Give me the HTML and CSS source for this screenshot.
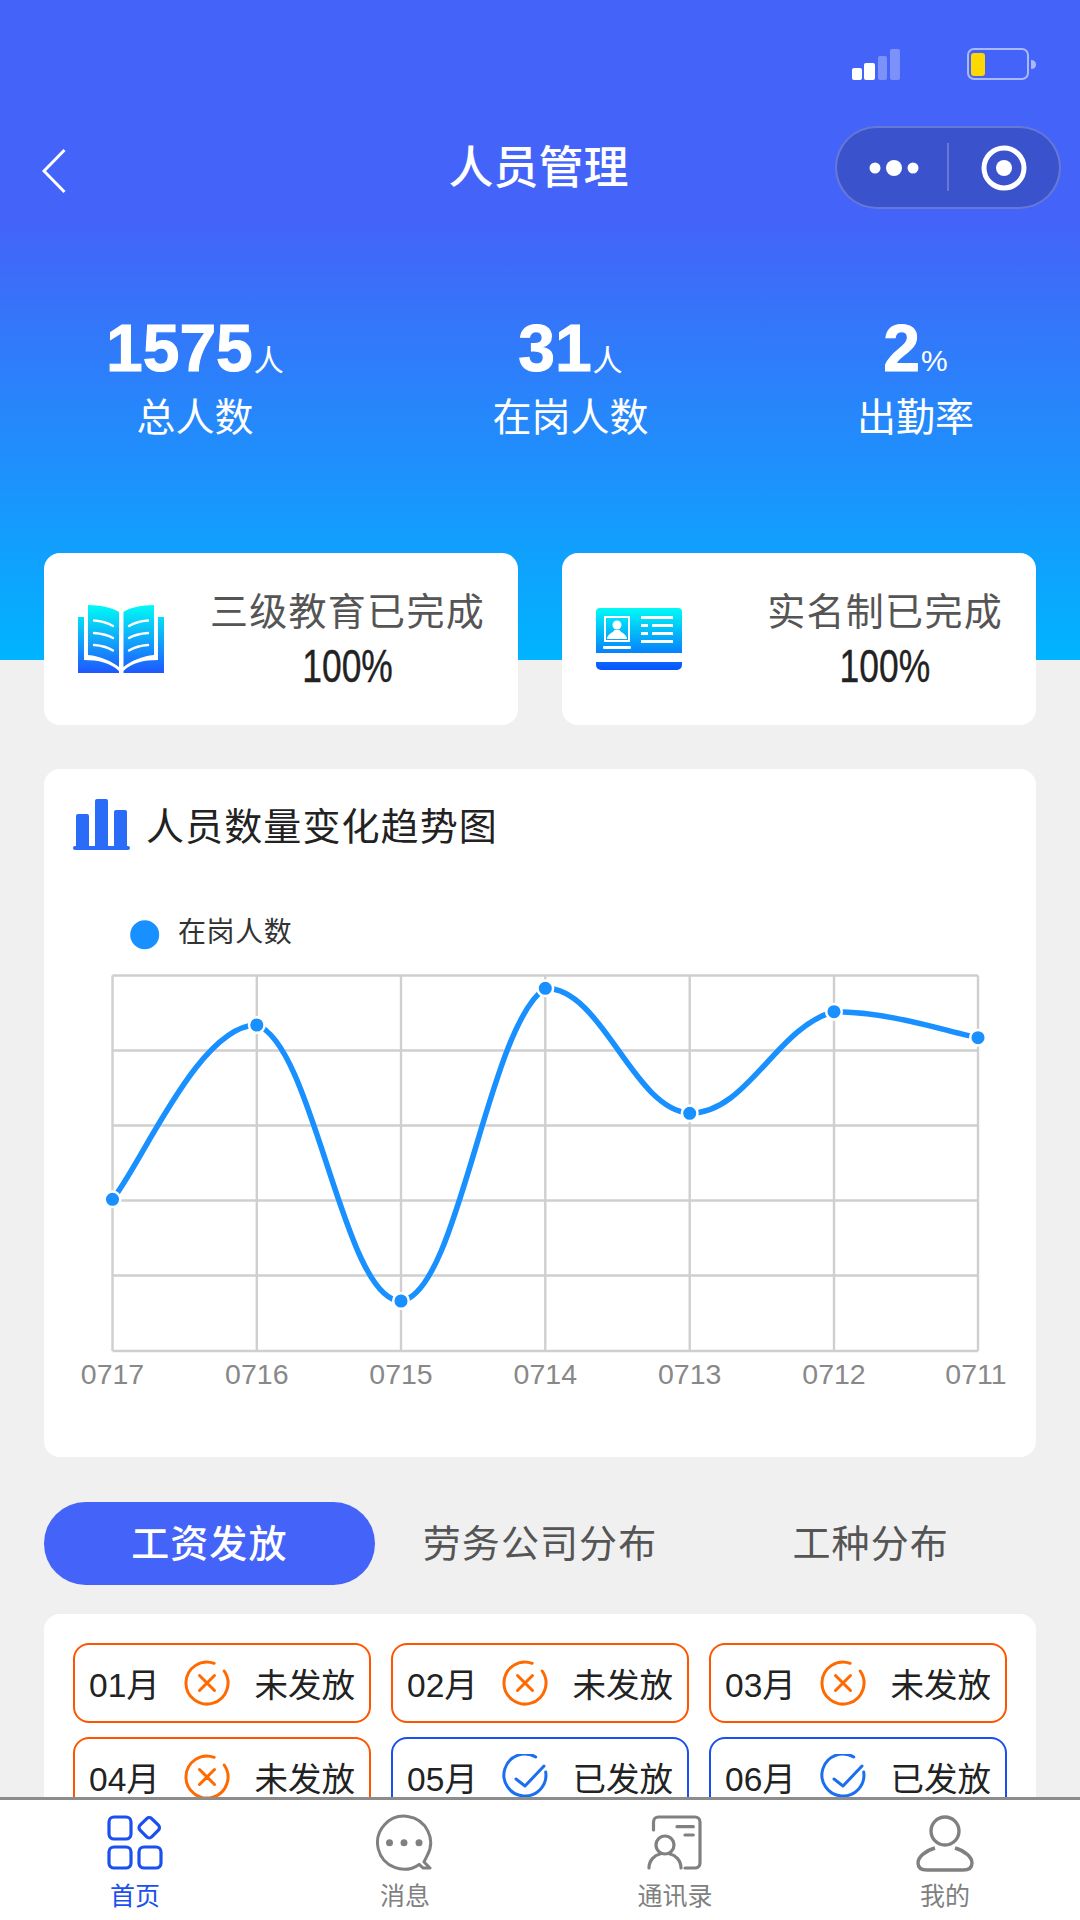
FILE: index.html
```html
<!DOCTYPE html>
<html lang="zh-CN">
<head>
<meta charset="utf-8">
<title>人员管理</title>
<link rel="stylesheet" href="styles.css">
</head>
<body>
<svg class="sprite" xmlns="http://www.w3.org/2000/svg">
  <symbol id="i-no" viewBox="0 0 46 46">
    <path d="M40.2 11A21 21 0 1 1 30.2 3.3" fill="none" stroke="currentColor" stroke-width="3" stroke-linecap="round"/>
    <path d="M15.5 15.5L30.5 30.5M30.5 15.5L15.5 30.5" fill="none" stroke="currentColor" stroke-width="3" stroke-linecap="round"/>
  </symbol>
  <symbol id="i-ok" viewBox="0 0 46 46">
    <path d="M43.7 18A21 21 0 1 1 33.7 3" fill="none" stroke="currentColor" stroke-width="3" stroke-linecap="round"/>
    <path d="M14 25L23 32L42 12" fill="none" stroke="currentColor" stroke-width="3" stroke-linecap="round" stroke-linejoin="round"/>
  </symbol>
</svg>
<div class="page">
  <main class="main">
    <header class="header">
      <div class="status">
        <svg class="signal" viewBox="0 0 48 31" width="48" height="31">
          <rect x="0" y="19" width="10" height="12" rx="2" fill="#fff"/>
          <rect x="12" y="14" width="11" height="17" rx="2" fill="#fff"/>
          <rect x="26" y="7" width="9" height="24" rx="2" fill="#fff" fill-opacity=".3"/>
          <rect x="38" y="0" width="10" height="31" rx="2" fill="#fff" fill-opacity=".3"/>
        </svg>
        <svg class="battery" viewBox="0 0 70 32" width="70" height="32">
          <rect x="2" y="1" width="60" height="30" rx="6" fill="none" stroke="#fff" stroke-opacity=".55" stroke-width="2"/>
          <rect x="5" y="5" width="14" height="23" rx="3" fill="#ffd800"/>
          <path d="M65 12c3 0 5 1.500 5 4.500s-2 4.500-5 4.500z" fill="#fff" fill-opacity=".55"/>
        </svg>
      </div>
      <div class="titlebar">
        <svg class="back" viewBox="0 0 24 46" width="24" height="46">
          <path d="M22.500 2L2 23L22.500 44" fill="none" stroke="#fff" stroke-width="3"/>
        </svg>
        <h1 class="title">人员管理</h1>
        <div class="capsule">
          <svg class="capsule-svg" viewBox="0 0 222 79" width="222" height="79">
            <circle cx="38" cy="40" r="5.500" fill="#fff"/>
            <circle cx="57" cy="40" r="8" fill="#fff"/>
            <circle cx="76" cy="40" r="5.500" fill="#fff"/>
            <path d="M111 15V63" stroke="#fff" stroke-opacity=".3" stroke-width="1.500"/>
            <circle cx="167" cy="40" r="20" fill="none" stroke="#fff" stroke-width="5"/>
            <circle cx="167" cy="40" r="8" fill="#fff"/>
          </svg>
        </div>
      </div>
      <div class="stats">
        <div class="stat">
          <div class="stat-value"><span class="num">1575</span><span class="unit">人</span></div>
          <div class="stat-label">总人数</div>
        </div>
        <div class="stat">
          <div class="stat-value"><span class="num">31</span><span class="unit">人</span></div>
          <div class="stat-label">在岗人数</div>
        </div>
        <div class="stat">
          <div class="stat-value"><span class="num">2</span><span class="unit">%</span></div>
          <div class="stat-label">出勤率</div>
        </div>
      </div>
    </header>

    <section class="summary">
      <div class="summary-card">
        <svg viewBox="0 0 86 68" width="86" height="68">
          <defs>
            <linearGradient id="g-book" gradientUnits="userSpaceOnUse" x1="0" y1="0" x2="0" y2="68">
              <stop offset="0" stop-color="#00fbf5"/><stop offset="1" stop-color="#1f57ff"/>
            </linearGradient>
          </defs>
          <path fill="url(#g-book)" d="M10 0C22 .5 33 2 41 7V62C33 56 22 51 10 50Z"/>
          <path fill="url(#g-book)" d="M76 0C64 .5 53 2 45.500 7V62C53 56 64 51 76 50Z"/>
          <path fill="url(#g-book)" d="M0 12H6V55C20 55 33 58 41 66V68H0Z"/>
          <path fill="url(#g-book)" d="M86 12H80V55C66 55 53 58 45.500 66V68H86Z"/>
          <g fill="none" stroke="#fff" stroke-width="2.400" stroke-linecap="round">
            <path d="M16 15.500C23 16 30 18 35 21"/><path d="M16 28C23 28.500 30 30 35 33"/><path d="M16 40C23 40.500 30 42.500 35 45.500"/>
            <path d="M70 15.500C63 16 56 18 51 21"/><path d="M70 28C63 28.500 56 30 51 33"/><path d="M70 40C63 40.500 56 42.500 51 45.500"/>
          </g>
        </svg>
        <div class="summary-text">
          <div class="summary-label">三级教育已完成</div>
          <div class="summary-value">100%</div>
        </div>
      </div>
      <div class="summary-card">
        <svg viewBox="0 0 86 62" width="86" height="62">
          <defs>
            <linearGradient id="g-id" gradientUnits="userSpaceOnUse" x1="0" y1="0" x2="0" y2="62">
              <stop offset="0" stop-color="#00fbf5"/><stop offset="1" stop-color="#0a52ff"/>
            </linearGradient>
          </defs>
          <path fill="url(#g-id)" d="M4 0H82A4 4 0 0 1 86 4V45H0V4A4 4 0 0 1 4 0Z"/>
          <path fill="url(#g-id)" d="M0 54H86V57A5 5 0 0 1 81 62H5A5 5 0 0 1 0 57Z"/>
          <rect x="9" y="9" width="24" height="24" fill="none" stroke="#fff" stroke-width="2"/>
          <circle cx="21" cy="17" r="4.500" fill="#fff"/>
          <path d="M11 31C11 26 17 25 18.500 22H23.500C25 25 31 26 31 31Z" fill="#fff"/>
          <g fill="#fff">
            <rect x="7" y="38" width="28" height="3" rx="1"/>
            <rect x="45" y="8" width="32" height="3"/>
            <rect x="45" y="16" width="7" height="3"/><rect x="56" y="16" width="21" height="3"/>
            <rect x="45" y="24" width="7" height="3"/><rect x="56" y="24" width="21" height="3"/>
            <rect x="45" y="32" width="32" height="3"/>
          </g>
        </svg>
        <div class="summary-text">
          <div class="summary-label">实名制已完成</div>
          <div class="summary-value">100%</div>
        </div>
      </div>
    </section>

    <section class="chart-card">
      <div class="chart-head">
        <svg viewBox="0 0 57 51" width="57" height="51">
          <g fill="#2a6cf8">
            <path d="M3 17a2 2 0 0 1 2-2h9a2 2 0 0 1 2 2v30H3z"/>
            <path d="M22 2a2 2 0 0 1 2-2h9a2 2 0 0 1 2 2v45H22z"/>
            <path d="M41 13a2 2 0 0 1 2-2h9a2 2 0 0 1 2 2v34H41z"/>
            <rect x="0" y="47" width="57" height="4" rx="2"/>
          </g>
        </svg>
        <h2 class="chart-title">人员数量变化趋势图</h2>
      </div>
      <svg class="chart" viewBox="44 900 992 557" width="992" height="557">
        <circle cx="144.700" cy="934.700" r="14.500" fill="#1890ff"/>
        <text class="legend-text" x="178" y="942">在岗人数</text>
        <g stroke="#cfcfcf" stroke-width="2.400" fill="none">
          <path d="M112.500 975.500H978M112.500 1050.500H978M112.500 1125.500H978M112.500 1200.500H978M112.500 1275.500H978M112.500 1351H978"/>
          <path d="M112.500 975.500V1351M256.800 975.500V1351M401 975.500V1351M545.300 975.500V1351M689.700 975.500V1351M834 975.500V1351M978 975.500V1351"/>
        </g>
        <path fill="none" stroke="#1890ff" stroke-width="5.500" d="M112.500 1199.300C141.400 1164.400 199 1025 256.800 1025C314.500 1045.300 343.300 1301 401 1301C458.700 1293.700 487.600 1025.800 545.300 988.300C603 988.300 632 1108.600 689.700 1113.300C747.400 1113.300 776.300 1026.800 834 1011.700C891.700 1011.700 949.200 1032.500 978 1037.700"/>
        <g fill="#1890ff" stroke="#fff" stroke-width="2.500">
          <circle cx="112.500" cy="1199.300" r="7.800"/>
          <circle cx="256.800" cy="1025" r="7.800"/>
          <circle cx="401" cy="1301" r="7.800"/>
          <circle cx="545.300" cy="988.300" r="7.800"/>
          <circle cx="689.700" cy="1113.300" r="7.800"/>
          <circle cx="834" cy="1011.700" r="7.800"/>
          <circle cx="978" cy="1037.700" r="7.800"/>
        </g>
        <g class="axis-text" text-anchor="middle">
          <text x="112.500" y="1384">0717</text>
          <text x="256.800" y="1384">0716</text>
          <text x="401" y="1384">0715</text>
          <text x="545.300" y="1384">0714</text>
          <text x="689.700" y="1384">0713</text>
          <text x="834" y="1384">0712</text>
          <text x="976" y="1384">0711</text>
        </g>
      </svg>
    </section>

    <nav class="tabs">
      <div class="tab tab-active">工资发放</div>
      <div class="tab">劳务公司分布</div>
      <div class="tab">工种分布</div>
    </nav>

    <section class="pay-card">
      <div class="pay-item pay-no"><span>01月</span><svg class="pay-icon"><use href="#i-no"/></svg><span>未发放</span></div>
      <div class="pay-item pay-no"><span>02月</span><svg class="pay-icon"><use href="#i-no"/></svg><span>未发放</span></div>
      <div class="pay-item pay-no"><span>03月</span><svg class="pay-icon"><use href="#i-no"/></svg><span>未发放</span></div>
      <div class="pay-item pay-no"><span>04月</span><svg class="pay-icon"><use href="#i-no"/></svg><span>未发放</span></div>
      <div class="pay-item pay-ok"><span>05月</span><svg class="pay-icon"><use href="#i-ok"/></svg><span>已发放</span></div>
      <div class="pay-item pay-ok"><span>06月</span><svg class="pay-icon"><use href="#i-ok"/></svg><span>已发放</span></div>
    </section>
  </main>

  <footer class="tabbar">
    <div class="tabbar-item tabbar-active">
      <svg viewBox="0 0 60 60" width="60" height="60">
        <g fill="none" stroke="currentColor" stroke-width="3.200" stroke-linejoin="round">
          <rect x="4" y="5" width="22" height="22" rx="5"/>
          <rect x="36" y="7.500" width="16.500" height="16.500" rx="3.500" transform="rotate(45 44.300 15.700)"/>
          <rect x="4" y="35" width="22" height="21" rx="5"/>
          <rect x="34" y="35" width="22" height="21" rx="5"/>
        </g>
      </svg>
      <span class="tabbar-label">首页</span>
    </div>
    <div class="tabbar-item">
      <svg viewBox="0 0 60 60" width="60" height="60">
        <path d="M44.200 52.400A26.500 26.500 0 1 1 52 43.900L49 50L55 56H48Z" fill="none" stroke="currentColor" stroke-width="3" stroke-linejoin="round"/>
        <circle cx="14.500" cy="30.700" r="3.500" fill="currentColor"/>
        <circle cx="29" cy="30.700" r="3.500" fill="currentColor"/>
        <circle cx="44" cy="30.700" r="3.500" fill="currentColor"/>
      </svg>
      <span class="tabbar-label">消息</span>
    </div>
    <div class="tabbar-item">
      <svg viewBox="0 0 60 60" width="60" height="60">
        <g fill="none" stroke="currentColor" stroke-width="3.200" stroke-linecap="round">
          <path d="M8.500 18V10a5 5 0 0 1 5-5H50a5 5 0 0 1 5 5V51a5 5 0 0 1-5 5H40"/>
          <circle cx="20" cy="33" r="9"/>
          <path d="M4 56C4 48 10 43 15 42M36 56C36 48 30 43 25 42"/>
          <path d="M32 14.700H48.300M40 23H48.300"/>
        </g>
      </svg>
      <span class="tabbar-label">通讯录</span>
    </div>
    <div class="tabbar-item">
      <svg viewBox="0 0 60 60" width="60" height="60">
        <g fill="none" stroke="currentColor" stroke-width="3.400">
          <circle cx="30" cy="19" r="14"/>
          <path d="M20 36C10 39 3 45 3 51C3 56 7 58 12 58H48C53 58 57 56 57 51C57 45 50 39 40 36"/>
        </g>
      </svg>
      <span class="tabbar-label">我的</span>
    </div>
  </footer>
</div>
</body>
</html>
```

FILE: styles.css
```css
* { box-sizing: border-box; }
html, body { margin: 0; padding: 0; }
body {
  width: 1080px;
  height: 1920px;
  overflow: hidden;
  background: #f0f0f0;
  font-family: "Liberation Sans", "Noto Sans CJK SC", sans-serif;
}
.sprite { width: 0; height: 0; position: absolute; }
.page { width: 1080px; height: 1920px; display: flex; flex-direction: column; overflow: hidden; }
.main { height: 1797px; flex: none; overflow: hidden; }

.header {
  height: 660px;
  background: linear-gradient(180deg, #4463f8 0, #4463f8 220px, #00b4ff 660px);
  color: #fff;
  padding-top: 48px;
}
.status { height: 32px; display: flex; justify-content: flex-end; align-items: flex-end; padding-right: 44px; gap: 66px; }
.titlebar {
  margin-top: 45px;
  height: 83px;
  display: grid;
  grid-template-columns: minmax(0, 1fr) auto minmax(0, 1fr);
  align-items: center;
  padding: 0 19px 0 42px;
}
.back { display: block; margin-top: 6px; }
.title { margin: 0; padding: 2px 26px 0 0; font-size: 45px; font-weight: 500; line-height: 83px; }
.capsule {
  justify-self: end;
  flex: none;
  width: 226px;
  height: 83px;
  border-radius: 42px;
  background: #3a52cc;
  border: 2px solid rgba(255, 255, 255, .22);
}
.capsule-svg { display: block; }

.stats { margin-top: 110px; padding: 0 106px; display: flex; justify-content: space-between; }
.stat { display: flex; flex-direction: column; align-items: center; }
.stat-value { height: 60px; line-height: 60px; white-space: nowrap; }
.num { font-size: 66px; font-weight: 700; -webkit-text-stroke: 1px #fff; }
.unit { font-size: 30px; margin-left: 1px; }
.stat-label { margin-top: 12px; font-size: 39px; line-height: 56px; }

.summary { margin: -107px 44px 0; display: grid; grid-template-columns: 474px 474px; gap: 44px; }
.summary-card {
  height: 172px;
  background: #fff;
  border-radius: 16px;
  display: flex;
  align-items: center;
  justify-content: space-between;
  padding: 0 33px 0 34px;
}
.summary-text { text-align: center; }
.summary-label { font-size: 38px; line-height: 54px; color: #555; letter-spacing: 1.300px; }
.summary-value { font-size: 46px; line-height: 54px; color: #222; transform: scaleX(.77); -webkit-text-stroke: .4px #222; }

.chart-card { margin: 44px 44px 0; height: 688px; background: #fff; border-radius: 16px; overflow: hidden; }
.chart-head { height: 131px; padding: 30px 0 0 29px; display: flex; align-items: flex-start; gap: 16px; }
.chart-title { margin: 0; padding-top: 1px; font-size: 38px; font-weight: 400; line-height: 54px; color: #222; letter-spacing: 1.100px; }
.chart { display: block; }
.legend-text { font-size: 28px; fill: #333; letter-spacing: .6px; }
.axis-text { font-size: 28.500px; fill: #888; }

.tabs { margin: 45px 44px 0; height: 83px; display: grid; grid-template-columns: repeat(3, 1fr); }
.tab { display: flex; align-items: center; justify-content: center; padding-bottom: 6px; font-size: 38px; color: #555; letter-spacing: 1.100px; border-radius: 42px; }
.tab-active { background: #4463f8; color: #fff; font-weight: 500; }

.pay-card {
  margin: 29px 44px 0;
  background: #fff;
  border-radius: 16px;
  padding: 29px 30px 29px 29px;
  display: grid;
  grid-template-columns: repeat(3, 298px);
  column-gap: 20px;
  row-gap: 14px;
}
.pay-item {
  height: 80px;
  border: 2px solid;
  border-radius: 16px;
  display: flex;
  align-items: center;
  justify-content: space-between;
  padding: 0 14px 2px;
  font-size: 33.500px;
  color: #222;
}
.pay-no { border-color: #ff5500; }
.pay-ok { border-color: #1a4ff0; }
.pay-icon { width: 46px; height: 46px; flex: none; margin-top: 2px; }
.pay-no .pay-icon { color: #ff6a00; }
.pay-ok .pay-icon { color: #1a6ff0; }

.tabbar {
  flex: 1;
  background: #fff;
  border-top: 3px solid #8c8c8c;
  display: grid;
  grid-template-columns: repeat(4, 1fr);
  padding-top: 12px;
}
.tabbar-item { display: flex; flex-direction: column; align-items: center; color: #808080; font-size: 25px; line-height: 34px; }
.tabbar-item svg { display: block; }
.tabbar-label { margin-top: 7px; }
.tabbar-active { color: #1a4ff0; }
```
